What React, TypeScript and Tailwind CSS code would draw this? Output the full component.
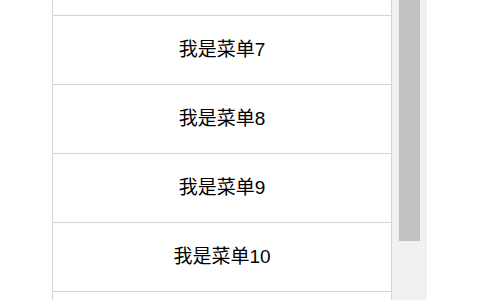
import { useLayoutEffect, useRef } from "react";

const menus = Array.from({ length: 12 }, (_, i) => `我是菜单${i + 1}`);

export default function App() {
  const listRef = useRef<HTMLDivElement>(null);

  useLayoutEffect(() => {
    if (listRef.current) {
      listRef.current.scrollTop = 398;
    }
  }, []);

  return (
    <div className="flex h-[300px] w-[480px] bg-white overflow-hidden">
      <div className="w-[52px] shrink-0" />
      <div
        ref={listRef}
        className="w-[340px] h-[300px] shrink-0 overflow-hidden border-x border-[#d4d4d4]"
      >
        {menus.map((menu) => (
          <div
            key={menu}
            className="h-[69px] flex items-center justify-center border-b border-[#d4d4d4] text-[19px] text-black pt-[1px]"
            style={{ fontFamily: '"Liberation Sans", "Noto Sans CJK SC", sans-serif' }}
          >
            {menu}
          </div>
        ))}
      </div>
      <div className="w-[35px] h-[300px] shrink-0 bg-[#f1f1f1] px-[7px]">
        <div className="h-[241px] w-full bg-[#c1c1c1]" />
      </div>
    </div>
  );
}
